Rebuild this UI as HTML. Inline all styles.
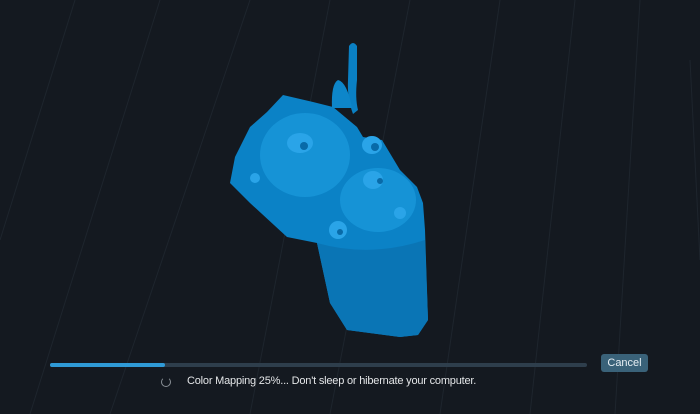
<!DOCTYPE html>
<html><head><style>
html,body{margin:0;padding:0;width:700px;height:414px;overflow:hidden;background:#141920;font-family:"Liberation Sans",sans-serif}
.wrap{position:relative;width:700px;height:414px}
svg{position:absolute;left:0;top:0}
.track{position:absolute;left:50px;top:363px;width:537px;height:4px;border-radius:2px;background:#2e3e4c}
.fill{position:absolute;left:50px;top:363px;width:115px;height:4px;border-radius:2px;background:#2f9ad6}
.btn{position:absolute;left:601px;top:354px;width:47px;height:18px;border-radius:3px;background:#3a6279;color:#e6eef3;font-size:11px;line-height:18px;text-align:center}
.msg{position:absolute;left:187px;top:375px;color:#e4e6e8;font-size:11px;letter-spacing:-0.2px}
.spin{position:absolute;left:161px;top:377px;width:8px;height:8px;border:1px solid #8a9096;border-top-color:transparent;border-radius:50%}
</style></head><body><div class="wrap">
<svg width="700" height="414" viewBox="0 0 700 414">
<g stroke="#1e252d" stroke-width="1" fill="none">
<line x1="75" y1="0" x2="0" y2="240"/>
<line x1="160" y1="0" x2="30" y2="414"/>
<line x1="250" y1="0" x2="110" y2="414"/>
<line x1="330" y1="0" x2="250" y2="414"/>
<line x1="410" y1="0" x2="330" y2="414"/>
<line x1="500" y1="0" x2="440" y2="414"/>
<line x1="575" y1="0" x2="530" y2="414"/>
<line x1="640" y1="0" x2="615" y2="414"/>
<line x1="690" y1="60" x2="700" y2="260"/>
</g>
<path fill="#0a80c4" d="M349 46 Q353 40 357 46 L357 80 Q355 98 358 110 L353 114 Q347 98 348 80 Z"/>
<path fill="#0d86ca" d="M332 108 Q331 84 338 80 Q347 82 352 108 Z"/>
<path fill="#0b82c6" d="M283 95 L313 102 L333 107 L357 127 L363 137 L382 140 L400 170 L417 187 L423 203 L425 230 L428 320 L418 335 L400 337 L347 330 L330 303 L317 243 L287 237 L250 203 L230 183 L235 157 L250 127 L267 112 Z"/>
<path fill="#0a75b5" d="M317 243 Q370 258 425 240 L428 320 L418 335 L400 337 L347 330 L330 303 Z"/>
<g fill="#1693d6">
<ellipse cx="305" cy="155" rx="45" ry="42"/>
<ellipse cx="378" cy="200" rx="38" ry="32"/>
</g>
<g fill="#2aa4e8">
<ellipse cx="300" cy="143" rx="13" ry="10"/>
<ellipse cx="372" cy="145" rx="10" ry="9"/>
<ellipse cx="373" cy="180" rx="10" ry="9"/>
<ellipse cx="338" cy="230" rx="9" ry="9"/>
<circle cx="400" cy="213" r="6"/>
<circle cx="255" cy="178" r="5"/>
</g>
<g fill="#086aa8">
<circle cx="304" cy="146" r="4"/>
<circle cx="375" cy="147" r="4"/>
<circle cx="340" cy="232" r="3"/>
<circle cx="380" cy="181" r="3"/>
</g>
</svg>
<div class="track"></div><div class="fill"></div>
<div class="btn">Cancel</div>
<div class="spin"></div>
<div class="msg">Color Mapping 25%... Don't sleep or hibernate your computer.</div>
</div></body></html>
